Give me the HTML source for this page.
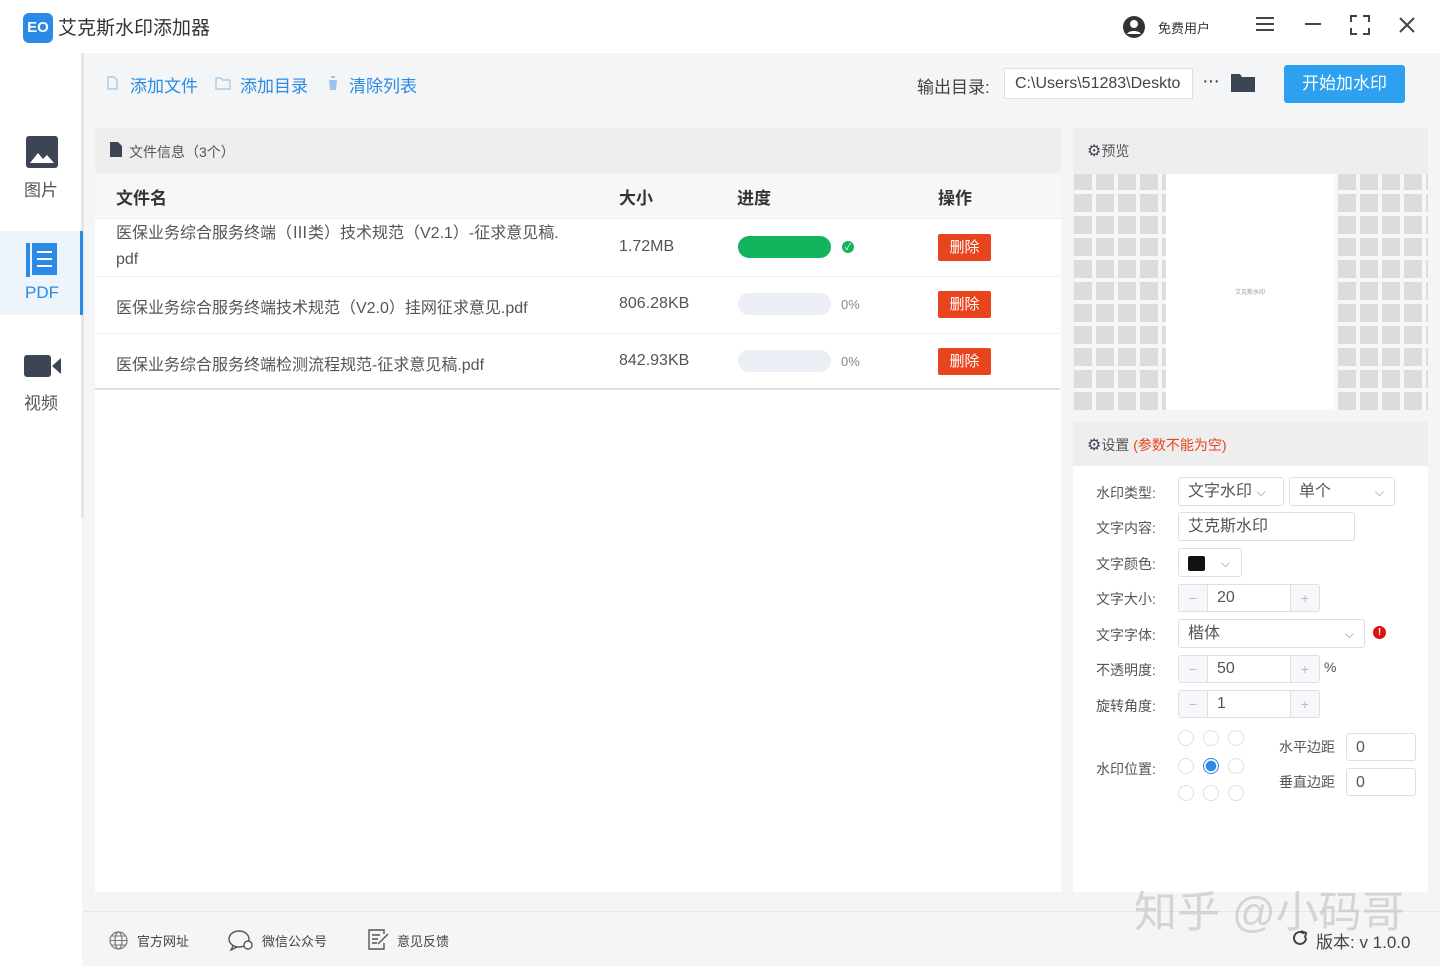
<!DOCTYPE html><html><head><meta charset="utf-8"><style>
*{margin:0;padding:0;box-sizing:border-box}
body{width:1440px;height:966px;position:relative;background:#f4f5f7;font-family:"Liberation Sans","Noto Sans CJK SC",sans-serif;color:#333;overflow:hidden}
.a{position:absolute}
.t{white-space:nowrap}
.inp{position:absolute;border:1px solid #dcdfe6;background:#fff;border-radius:3px;font-size:16px;color:#555;padding-left:9px;line-height:28px}
.lbl{position:absolute;left:1096px;font-size:14px;color:#555}
.num{position:absolute;height:28px;width:142px;border:1px solid #dcdfe6;border-radius:3px;background:#fff}
.num .m,.num .p{position:absolute;top:0;width:29px;height:26px;background:#f5f7fa;color:#bbb;text-align:center;line-height:26px;font-size:14px}
.num .m{left:0;border-right:1px solid #dcdfe6}.num .p{right:0;border-left:1px solid #dcdfe6}
.num span.v{position:absolute;left:38px;line-height:26px;font-size:16px;color:#555}
.rad{position:absolute;width:16px;height:16px;border:1px solid #dcdfe6;border-radius:50%;background:#fff}
.row{position:absolute;left:95px;width:965px;border-bottom:1px solid #ebeef5;background:#fff}
.del{position:absolute;left:938px;width:53px;height:27px;background:#e8451e;color:#fff;font-size:15px;text-align:center;line-height:27px;border-radius:2px}
.bar{position:absolute;left:738px;width:93px;height:22px;border-radius:11px;background:#ebeef5}
.tb{position:absolute;top:72px;font-size:17px;color:#2a8ae6;white-space:nowrap}
.ft{position:absolute;top:931px;font-size:13px;color:#444;white-space:nowrap}
</style></head><body>
<div class="a" style="left:0;top:0;width:1440px;height:53px;background:#fff"></div>
<div class="a" style="left:23px;top:13px;width:30px;height:30px;background:#2a8ae6;border-radius:6px;color:#fff;font-weight:bold;font-size:15px;text-align:center;line-height:30px">EO</div>
<div class="a t" style="left:58px;top:13px;font-size:19px;color:#333">艾克斯水印添加器</div>
<svg class="a" style="left:1122px;top:15px" width="24" height="24" viewBox="0 0 24 24"><circle cx="12" cy="12" r="11" fill="#333"/><circle cx="12" cy="9" r="4" fill="#fff"/><path d="M5 19c2-4 12-4 14 0" fill="#fff"/></svg>
<div class="a t" style="left:1158px;top:18px;font-size:13px;color:#333">免费用户</div>
<svg class="a" style="left:1255px;top:16px" width="20" height="16"><path d="M1 2h18M1 8h18M1 14h18" stroke="#444" stroke-width="2"/></svg>
<svg class="a" style="left:1304px;top:16px" width="18" height="16"><path d="M1 8h16" stroke="#444" stroke-width="2"/></svg>
<svg class="a" style="left:1350px;top:15px" width="20" height="20"><path d="M1 7V1h6M13 1h6v6M19 13v6h-6M7 19H1v-6" stroke="#444" stroke-width="2" fill="none"/></svg>
<svg class="a" style="left:1398px;top:16px" width="18" height="18"><path d="M2 2l14 14M16 2L2 16" stroke="#444" stroke-width="2"/></svg>
<div class="a" style="left:0;top:53px;width:82px;height:913px;background:#fff"></div>
<div class="a" style="left:81px;top:53px;width:3px;height:465px;background:#e4e6ea"></div>
<svg class="a" style="left:26px;top:136px" width="32" height="32"><rect width="32" height="32" rx="3" fill="#3d4454"/><path d="M4 27l8-10 5 6 4-4 7 8z" fill="#fff"/></svg>
<div class="a t" style="left:24px;top:176px;font-size:17px;color:#555">图片</div>
<div class="a" style="left:0;top:231px;width:83px;height:84px;background:#eef4fc"></div>
<div class="a" style="left:80px;top:231px;width:3px;height:84px;background:#2a8ae6"></div>
<svg class="a" style="left:26px;top:243px" width="32" height="34"><rect x="0" y="0" width="4" height="34" fill="#2a8ae6"/><rect x="6" y="0" width="25" height="32" fill="#2a8ae6"/><path d="M11 9h15M11 16h15M11 23h15" stroke="#fff" stroke-width="2"/></svg>
<div class="a t" style="left:25px;top:283px;font-size:17px;color:#2a8ae6">PDF</div>
<svg class="a" style="left:24px;top:353px" width="37" height="26"><rect x="0" y="2" width="27" height="22" rx="3" fill="#3d4454"/><path d="M28 13l9-8v16z" fill="#3d4454"/></svg>
<div class="a t" style="left:24px;top:389px;font-size:17px;color:#555">视频</div>
<!-- toolbar -->
<svg class="a" style="left:107px;top:76px" width="11" height="14"><path d="M1 1h6l3 3v9H1z" fill="none" stroke="#9bc4ef" stroke-width="1.2"/></svg>
<div class="tb" style="left:130px">添加文件</div>
<svg class="a" style="left:215px;top:77px" width="16" height="13"><path d="M1 1h5l1.5 2H15v9H1z" fill="none" stroke="#9bc4ef" stroke-width="1.2"/></svg>
<div class="tb" style="left:240px">添加目录</div>
<svg class="a" style="left:328px;top:76px" width="10" height="14"><path d="M0 2h10M3 2V0h4v2M1 4h8l-1 10H2z" fill="#9bc4ef"/></svg>
<div class="tb" style="left:349px">清除列表</div>
<div class="a t" style="left:917px;top:73px;font-size:17px;color:#444">输出目录:</div>
<div class="a t" style="left:1004px;top:68px;width:189px;height:31px;border:1px solid #dcdfe6;background:#fff;font-size:16px;line-height:29px;padding-left:10px;color:#444;overflow:hidden">C:\Users\51283\Deskto</div>
<div class="a t" style="left:1202px;top:70px;font-size:20px;color:#444;letter-spacing:-1px">···</div>
<svg class="a" style="left:1231px;top:72px" width="24" height="20"><path d="M0 2h9l2 3h13v15H0z" fill="#3d4454"/></svg>
<div class="a" style="left:1284px;top:65px;width:121px;height:38px;background:#2da0f0;border-radius:3px;color:#fff;font-size:17px;text-align:center;line-height:38px">开始加水印</div>
<!-- file panel -->
<div class="a" style="left:95px;top:128px;width:966px;height:764px;background:#fff"></div>
<div class="a" style="left:95px;top:128px;width:966px;height:45px;background:#eeeeee"></div>
<svg class="a" style="left:110px;top:142px" width="12" height="15"><path d="M0 0h8l4 4v11H0z" fill="#3d4454"/></svg>
<div class="a t" style="left:129px;top:142px;font-size:14px;color:#555">文件信息（3个）</div>
<div class="a" style="left:95px;top:173px;width:966px;height:46px;background:#f7f7f8;border-bottom:1px solid #ebeef5"></div>
<div class="a t" style="left:116px;top:184px;font-size:17px;font-weight:bold;color:#333">文件名</div>
<div class="a t" style="left:619px;top:184px;font-size:17px;font-weight:bold;color:#333">大小</div>
<div class="a t" style="left:737px;top:184px;font-size:17px;font-weight:bold;color:#333">进度</div>
<div class="a t" style="left:938px;top:184px;font-size:17px;font-weight:bold;color:#333">操作</div>
<div class="row" style="top:219px;height:58px"></div>
<div class="row" style="top:277px;height:57px"></div>
<div class="row" style="top:334px;height:56px;border-bottom:2px solid #dcdfe6"></div>
<div class="a" style="left:116px;top:221px;font-size:16px;color:#555;line-height:26px;width:470px">医保业务综合服务终端（Ⅲ类）技术规范（V2.1）-征求意见稿.<br>pdf</div>
<div class="a t" style="left:619px;top:238px;font-size:16px;color:#555">1.72MB</div>
<div class="bar" style="top:236px;background:#13b45e"></div>
<div class="a" style="left:842px;top:241px;width:12px;height:12px;border-radius:50%;background:#13b45e;color:#fff;font-size:9px;text-align:center;line-height:12px">✓</div>
<div class="del" style="top:234px">删除</div>
<div class="a t" style="left:116px;top:294px;font-size:16px;color:#555">医保业务综合服务终端技术规范（V2.0）挂网征求意见.pdf</div>
<div class="a t" style="left:619px;top:295px;font-size:16px;color:#555">806.28KB</div>
<div class="bar" style="top:293px"></div>
<div class="a t" style="left:841px;top:297px;font-size:13px;color:#888">0%</div>
<div class="del" style="top:291px">删除</div>
<div class="a t" style="left:116px;top:351px;font-size:16px;color:#555">医保业务综合服务终端检测流程规范-征求意见稿.pdf</div>
<div class="a t" style="left:619px;top:352px;font-size:16px;color:#555">842.93KB</div>
<div class="bar" style="top:350px"></div>
<div class="a t" style="left:841px;top:354px;font-size:13px;color:#888">0%</div>
<div class="del" style="top:348px">删除</div>
<!-- preview -->
<div class="a" style="left:1073px;top:128px;width:355px;height:282px;background:#eeeeee"></div>
<div class="a t" style="left:1087px;top:141px;font-size:14px;color:#555"><span style="color:#3d4454;font-size:16px">⚙</span>预览</div>
<div class="a" style="left:1074px;top:174px;width:354px;height:236px;background-color:#f4f4f4;background-image:repeating-linear-gradient(0deg,transparent 0 18px,#f7f7f7 18px 22px),repeating-linear-gradient(90deg,#dcdcdc 0 18px,#f7f7f7 18px 22px)"></div>
<div class="a" style="left:1166px;top:174px;width:3px;height:236px;background:#fff"></div>
<div class="a" style="left:1169px;top:174px;width:165px;height:236px;background:#fff"></div>
<div class="a t" style="left:1235px;top:287px;font-size:6px;color:#999">艾克斯水印</div>
<!-- settings -->
<div class="a" style="left:1073px;top:422px;width:355px;height:470px;background:#fff"></div>
<div class="a" style="left:1073px;top:422px;width:355px;height:44px;background:#eeeeee"></div>
<div class="a t" style="left:1087px;top:435px;font-size:14px;color:#555"><span style="color:#3d4454;font-size:16px">⚙</span>设置 <span style="color:#e8451e">(参数不能为空)</span></div>
<div class="lbl" style="top:483px">水印类型:</div>
<div class="inp" style="left:1178px;top:477px;width:106px;height:29px">文字水印 <span style="font-size:12px;color:#888">⌵</span></div>
<div class="inp" style="left:1289px;top:477px;width:106px;height:29px">单个<span style="position:absolute;right:10px;font-size:12px;color:#888">⌵</span></div>
<div class="lbl" style="top:518px">文字内容:</div>
<div class="inp" style="left:1178px;top:512px;width:177px;height:29px">艾克斯水印</div>
<div class="lbl" style="top:554px">文字颜色:</div>
<div class="inp" style="left:1178px;top:548px;width:64px;height:29px"><span style="position:absolute;left:9px;top:7px;width:17px;height:15px;background:#111;border-radius:2px"></span><span style="position:absolute;left:42px;font-size:12px;color:#888">⌵</span></div>
<div class="lbl" style="top:589px">文字大小:</div>
<div class="num" style="left:1178px;top:584px"><div class="m">−</div><span class="v">20</span><div class="p">+</div></div>
<div class="lbl" style="top:625px">文字字体:</div>
<div class="inp" style="left:1178px;top:619px;width:187px;height:29px">楷体<span style="position:absolute;right:10px;font-size:12px;color:#888">⌵</span></div>
<div class="a" style="left:1373px;top:626px;width:13px;height:13px;border-radius:50%;background:#e01010;color:#fff;font-size:10px;font-weight:bold;text-align:center;line-height:13px">!</div>
<div class="lbl" style="top:660px">不透明度:</div>
<div class="num" style="left:1178px;top:655px"><div class="m">−</div><span class="v">50</span><div class="p">+</div></div>
<div class="a t" style="left:1324px;top:659px;font-size:14px;color:#555">%</div>
<div class="lbl" style="top:696px">旋转角度:</div>
<div class="num" style="left:1178px;top:690px"><div class="m">−</div><span class="v">1</span><div class="p">+</div></div>
<div class="lbl" style="top:759px">水印位置:</div>
<div class="rad" style="left:1178px;top:730px"></div><div class="rad" style="left:1203px;top:730px"></div><div class="rad" style="left:1228px;top:730px"></div>
<div class="rad" style="left:1178px;top:758px"></div><div class="rad" style="left:1203px;top:758px;border:1px solid #2a8ae6;background:radial-gradient(#2a8ae6 0 5px,#fff 5.5px)"></div><div class="rad" style="left:1228px;top:758px"></div>
<div class="rad" style="left:1178px;top:785px"></div><div class="rad" style="left:1203px;top:785px"></div><div class="rad" style="left:1228px;top:785px"></div>
<div class="a t" style="left:1279px;top:737px;font-size:14px;color:#555">水平边距</div>
<div class="inp" style="left:1346px;top:733px;width:70px;height:28px">0</div>
<div class="a t" style="left:1279px;top:772px;font-size:14px;color:#555">垂直边距</div>
<div class="inp" style="left:1346px;top:768px;width:70px;height:28px">0</div>
<!-- footer -->
<div class="a" style="left:84px;top:911px;width:1356px;height:1px;background:#e4e6ea"></div>
<svg class="a" style="left:109px;top:931px" width="19" height="19"><circle cx="9.5" cy="9.5" r="8.5" fill="none" stroke="#777" stroke-width="1.2"/><ellipse cx="9.5" cy="9.5" rx="3.5" ry="8.5" fill="none" stroke="#777" stroke-width="1.2"/><path d="M1 9.5h17M2.5 5h14M2.5 14h14" stroke="#777" stroke-width="1"/></svg>
<div class="ft" style="left:137px">官方网址</div>
<svg class="a" style="left:228px;top:929px" width="28" height="22"><ellipse cx="11" cy="10" rx="10" ry="8" fill="none" stroke="#555" stroke-width="1.4"/><path d="M5 17l-2 4 6-3" fill="none" stroke="#555" stroke-width="1.4"/><circle cx="20" cy="16" r="4" fill="#fff" stroke="#555" stroke-width="1.4"/></svg>
<div class="ft" style="left:262px">微信公众号</div>
<svg class="a" style="left:368px;top:929px" width="22" height="21"><path d="M16 5V1H1v19h15v-6" fill="none" stroke="#555" stroke-width="1.4"/><path d="M4 6h8M4 10h6M4 14h5M10 15l10-10" stroke="#555" stroke-width="1.4"/></svg>
<div class="ft" style="left:397px">意见反馈</div>
<div class="a t" style="left:1134px;top:878px;font-size:43px;color:rgba(200,200,200,0.75)">知乎 @小码哥</div>
<svg class="a" style="left:1291px;top:929px" width="18" height="18"><path d="M15 9a6 6 0 1 1-2-4.5" fill="none" stroke="#444" stroke-width="2"/><path d="M10 2l5 2-1 5" fill="none" stroke="#444" stroke-width="2"/></svg>
<div class="a t" style="left:1316px;top:928px;font-size:17px;color:#444">版本: v 1.0.0</div>
</body></html>
